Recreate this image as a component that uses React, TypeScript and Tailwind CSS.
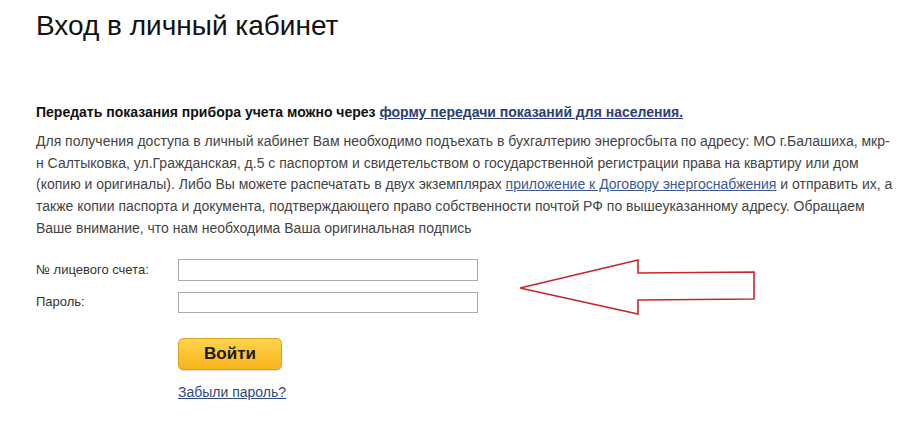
export default function App() {
  return (
    <div className="relative h-[428px] w-[910px] overflow-hidden bg-white font-['Liberation_Sans',Arial,sans-serif] text-[#333]">
      <div className="pl-[36px] pt-[8px]">
        <h1 className="text-[28px] leading-[36px] text-[#111]">Вход в личный кабинет</h1>

        <p className="mt-[59px] text-[14px] font-bold leading-[19px] text-[#111]">
          Передать показания прибора учета можно через{" "}
          <a href="#" className="text-[#2c3e73] underline">
            форму передачи показаний для населения.
          </a>
        </p>

        <p className="mt-[9px] w-[874px] text-[14px] leading-[21.7px] text-[#444]">
          Для получения доступа в личный кабинет Вам необходимо подъехать в бухгалтерию энергосбыта по адресу: МО г.Балашиха, мкр-
          <br />
          н Салтыковка, ул.Гражданская, д.5 с паспортом и свидетельством о государственной регистрации права на квартиру или дом
          <br />
          (копию и оригиналы). Либо Вы можете распечатать в двух экземплярах{" "}
          <a href="#" className="text-[#3a5a94] underline">
            приложение к Договору энергоснабжения
          </a>{" "}
          и отправить их, а
          <br />
          также копии паспорта и документа, подтверждающего право собственности почтой РФ по вышеуказанному адресу. Обращаем
          <br />
          Ваше внимание, что нам необходима Ваша оригинальная подпись
        </p>

        <div className="mt-[19px] flex flex-col gap-[11px]">
          <div className="flex items-center">
            <label className="w-[142px] text-[13px] text-[#333]">№ лицевого счета:</label>
            <input className="h-[22px] w-[300px] border border-[#aaa] bg-white outline-none" />
          </div>
          <div className="flex items-center">
            <label className="w-[142px] text-[13px] text-[#333]">Пароль:</label>
            <input type="password" className="h-[21px] w-[300px] border border-[#aaa] bg-white outline-none" />
          </div>
        </div>

        <div className="ml-[142px] mt-[25px] flex flex-col items-start">
          <button className="h-[32px] w-[104px] rounded-[5px] border border-[#e0a21a] bg-gradient-to-b from-[#ffd54a] to-[#f7b21a] text-[17px] font-bold text-[#1a1a1a] shadow-[0_1px_1px_rgba(0,0,0,0.15)]">
            Войти
          </button>
          <a href="#" className="mt-[12px] text-[14px] text-[#2e4a7d] underline">
            Забыли пароль?
          </a>
        </div>
      </div>

      <svg className="absolute left-0 top-0" width="910" height="428" viewBox="0 0 910 428">
        <polygon
          points="520,288 638,260 638,273 754,272 754,299 638,300 638,314"
          fill="none"
          stroke="#c8262b"
          strokeWidth="1.6"
          strokeLinejoin="miter"
        />
      </svg>
    </div>
  );
}
